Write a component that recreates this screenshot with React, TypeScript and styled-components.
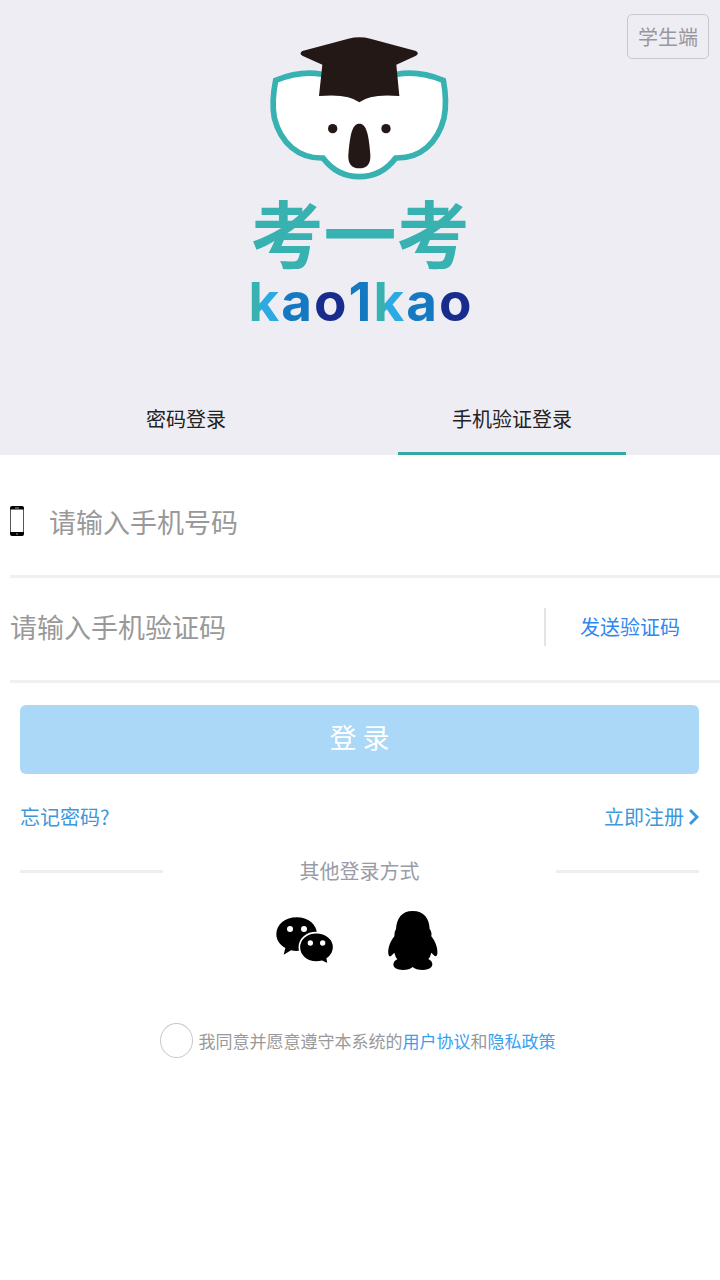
import React from 'react';
import styled, { createGlobalStyle } from 'styled-components';

const GlobalStyle = createGlobalStyle`
  *, *::before, *::after { box-sizing: border-box; }
  body {
    margin: 0;
    background: #fff;
    color: #222;
    font-family: "Noto Sans CJK SC", "Noto Sans", sans-serif;
    font-size: 20px;
    line-height: 30px;
  }
  button, input { font: inherit; }
  button { border: 0; padding: 0; background: none; cursor: pointer; }
  a { text-decoration: none; }
`;

const Page = styled.main`
  min-height: 100vh;
  background: #fff;
`;

const Hero = styled.header`
  background: #eeedf4;
`;

const Banner = styled.div`
  display: grid;
  grid-template-columns: 1fr auto 1fr;
  align-items: start;
  height: 384px;
`;

const RoleButton = styled.button`
  grid-column: 3;
  justify-self: end;
  margin: 14px 11px 0 0;
  width: 82px;
  height: 45px;
  border: 1px solid #c9c8ce;
  border-radius: 5px;
  color: #98979d;
`;

const Brand = styled.div`
  grid-column: 2;
  display: flex;
  flex-direction: column;
  align-items: center;
  padding-top: 20px;
`;

const BrandName = styled.h1`
  margin: 0;
  font-size: 73px;
  line-height: 80px;
  font-weight: 700;
  color: #38b1b1;
`;

const Latin = styled.div`
  display: flex;
  gap: 2px;
  font-family: Inter, sans-serif;
  font-weight: 700;
  font-size: 53px;
  line-height: 64px;
`;

const Letter = styled.span<{ $fill: string }>`
  background: ${(p) => p.$fill};
  background-clip: text;
  -webkit-background-clip: text;
  color: transparent;
`;

const Tabs = styled.div`
  display: flex;
  padding: 0 45px 0 23px;
`;

const Tab = styled.button<{ $active?: boolean }>`
  flex: 1;
  display: flex;
  flex-direction: column;
  align-items: center;
  justify-content: space-between;
  height: 71px;
  padding-top: 20px;
  color: #222;
  &::after {
    content: "";
    width: 70%;
    height: 3px;
    background: ${(p) => (p.$active ? '#35a8a6' : 'transparent')};
  }
`;

const Field = styled.div`
  display: flex;
  align-items: center;
  margin-left: 10px;
  border-bottom: 3px solid #f0f0f0;
`;

const PhoneField = styled(Field)`
  height: 123px;
  padding-top: 12px;
`;

const CodeField = styled(Field)`
  height: 105px;
  padding-bottom: 5px;
`;

const FieldLabel = styled.label`
  display: flex;
  width: 39px;
`;

const TextInput = styled.input`
  flex: 1;
  min-width: 0;
  height: 44px;
  padding: 0;
  border: 0;
  outline: 0;
  background: none;
  font-size: 27px;
  color: #333;
  &::placeholder { color: #999; opacity: 1; }
`;

const SendCode = styled.button`
  width: 176px;
  height: 38px;
  padding-right: 6px;
  border-left: 2px solid #e4e4e4;
  color: #2e87f2;
`;

const Actions = styled.div`
  padding: 22px 21px 0 20px;
`;

const LoginButton = styled.button`
  display: block;
  width: 100%;
  height: 69px;
  padding-bottom: 6px;
  border-radius: 6px;
  background: #abd8f6;
  color: #fff;
  font-size: 27px;
`;

const LinkRow = styled.nav`
  display: flex;
  justify-content: space-between;
  margin-top: 28px;
`;

const ActionLink = styled.a`
  display: flex;
  align-items: center;
  gap: 5px;
  color: #3c98dc;
`;

const Divider = styled.div`
  display: flex;
  align-items: center;
  justify-content: space-between;
  margin-top: 24px;
  color: #999ba7;
  &::before, &::after {
    content: "";
    width: 21%;
    height: 3px;
    background: #eee;
  }
`;

const Socials = styled.div`
  display: flex;
  justify-content: center;
  align-items: center;
  gap: 52px;
  margin-top: 24px;
  padding-right: 6px;
`;

const SocialButton = styled.button`
  display: flex;
  color: #000;
`;

const Agreement = styled.div`
  display: flex;
  justify-content: center;
  align-items: center;
  gap: 6px;
  margin-top: 51px;
  padding-right: 4px;
  font-size: 17px;
  color: #999;
`;

const Check = styled.input`
  appearance: none;
  flex: none;
  width: 33px;
  height: 35px;
  margin: 0;
  border: 1px solid #c8c8c8;
  border-radius: 50%;
  &:checked { background: #35a8a6; }
`;

const PolicyLink = styled.a`
  color: #3aa0ee;
`;

const TEAL = '#38b1b1';
const BLUE = '#1479c0';
const NAVY = '#172c8c';
const K_FILL = 'linear-gradient(90deg, #38b1b1 38%, #2caae2 38%)';

const LATIN_NAME: [string, string][] = [
  ['k', K_FILL],
  ['a', BLUE],
  ['o', NAVY],
  ['1', BLUE],
  ['k', K_FILL],
  ['a', BLUE],
  ['o', NAVY],
];

const Koala = () => (
  <svg width="240" height="170" viewBox="0 0 720 510" aria-hidden="true">
    <path
      d="M107 181Q182 151 245 163H471Q535 151 610 181Q622 245 612 294C593 369 541 416 467 414Q425 470 358 470Q291 470 249 414C175 416 122 369 103 294Q94 245 107 181Z"
      fill="#fff"
      stroke={TEAL}
      strokeWidth="17"
    />
    <path
      d="M187 93L325 56Q358 48 391 56L528 93Q539 101 528 107L469 134L478 228Q391 220 358 247Q325 220 237 228L247 134L187 107Q176 101 187 93Z"
      fill="#231815"
    />
    <circle cx="278" cy="326" r="14" fill="#231815" />
    <circle cx="438" cy="326" r="14" fill="#231815" />
    <path d="M358 311C379 311 386 342 391 404Q393 445 358 445Q323 445 325 404C330 342 337 311 358 311Z" fill="#231815" />
  </svg>
);

const PhoneIcon = () => (
  <svg width="15" height="30" viewBox="0 0 15 30" aria-hidden="true">
    <rect x="0.5" y="1" width="13" height="28" rx="2" fill="#fff" stroke="#555" />
    <path d="M2 0H12Q14 0 14 2V3.500H0V2Q0 0 2 0ZM0 26H14V28Q14 30 12 30H2Q0 30 0 28Z" fill="#000" />
    <path d="M5 2H9M6 28H8" stroke="#999" />
  </svg>
);

const WechatIcon = () => (
  <svg width="60" height="50" viewBox="42 62 180 150" aria-hidden="true">
    <path d="M107 66C141 66 168 88 168 117S141 167 107 167Q98 167 90 165L68 178L73 158C56 149 46 134 46 117C46 88 73 66 107 66Z" fill="currentColor" />
    <path d="M166 112C195 112 218 131 218 156Q218 177 199 190L202 207L183 198Q175 200 166 200C137 200 115 181 115 156S137 112 166 112Z" fill="currentColor" stroke="#fff" strokeWidth="5" />
    <g fill="#fff">
      <circle cx="87" cy="101" r="9" />
      <circle cx="129" cy="101" r="9" />
      <circle cx="148" cy="143" r="8" />
      <circle cx="185" cy="143" r="8" />
    </g>
  </svg>
);

const QQIcon = () => (
  <svg width="52" height="62" viewBox="381 46 156 186" aria-hidden="true">
    <path
      d="M458 49C492 49 508 72 509 103Q516 111 514 125C526 140 534 160 532 178Q530 187 524 184L514 174Q511 187 505 193Q518 199 517 211Q514 225 489 226Q467 226 458 217Q449 226 428 226Q402 225 400 211Q400 199 412 194Q406 187 403 174L393 184Q387 188 385 178C383 160 391 140 403 125Q402 112 408 103C410 72 425 49 458 49Z"
      fill="currentColor"
    />
  </svg>
);

const Chevron = () => (
  <svg width="10" height="18" viewBox="0 0 10 18" fill="none" stroke="currentColor" strokeWidth="3" aria-hidden="true">
    <path d="M1 2L8 9L1 16" />
  </svg>
);

export default function App() {
  return (
    <Page>
      <GlobalStyle />
      <Hero>
        <Banner>
          <Brand>
            <Koala />
            <BrandName>考一考</BrandName>
            <Latin>
              {LATIN_NAME.map(([char, fill], i) => (
                <Letter key={i} $fill={fill}>{char}</Letter>
              ))}
            </Latin>
          </Brand>
          <RoleButton type="button">学生端</RoleButton>
        </Banner>
        <Tabs role="tablist">
          <Tab type="button" role="tab" aria-selected={false}>密码登录</Tab>
          <Tab type="button" role="tab" aria-selected $active>手机验证登录</Tab>
        </Tabs>
      </Hero>
      <form onSubmit={(e) => e.preventDefault()}>
        <PhoneField>
          <FieldLabel htmlFor="phone" aria-label="手机号码"><PhoneIcon /></FieldLabel>
          <TextInput id="phone" type="tel" placeholder="请输入手机号码" />
        </PhoneField>
        <CodeField>
          <TextInput type="text" aria-label="手机验证码" placeholder="请输入手机验证码" />
          <SendCode type="button">发送验证码</SendCode>
        </CodeField>
        <Actions>
          <LoginButton type="submit">登 录</LoginButton>
          <LinkRow>
            <ActionLink href="#forgot">忘记密码?</ActionLink>
            <ActionLink href="#register">立即注册<Chevron /></ActionLink>
          </LinkRow>
          <Divider>其他登录方式</Divider>
          <Socials>
            <SocialButton type="button" aria-label="微信"><WechatIcon /></SocialButton>
            <SocialButton type="button" aria-label="QQ"><QQIcon /></SocialButton>
          </Socials>
          <Agreement>
            <Check id="agree" type="checkbox" />
            <span>
              <label htmlFor="agree">我同意并愿意遵守本系统的</label>
              <PolicyLink href="#terms">用户协议</PolicyLink>和<PolicyLink href="#privacy">隐私政策</PolicyLink>
            </span>
          </Agreement>
        </Actions>
      </form>
    </Page>
  );
}
